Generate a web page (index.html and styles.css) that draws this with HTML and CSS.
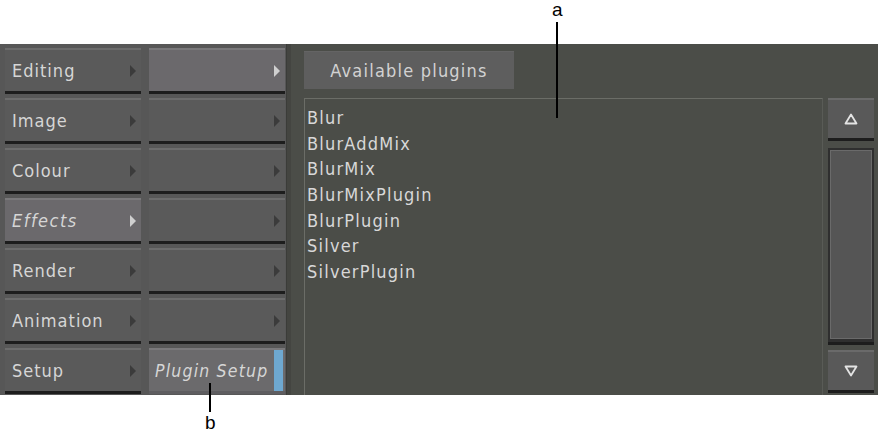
FILE: index.html
```html
<!DOCTYPE html>
<html>
<head>
<meta charset="utf-8">
<link rel="stylesheet" href="styles.css">
</head>
<body>
<div class="page">
  <div class="top-space"></div>
  <div class="panel">
    <div class="menus">
      <div class="btn"><span class="lbl">Editing</span><span class="arr"></span></div>
      <div class="btn hl"><span class="lbl"></span><span class="arr"></span></div>
      <div class="btn"><span class="lbl">Image</span><span class="arr"></span></div>
      <div class="btn"><span class="lbl"></span><span class="arr"></span></div>
      <div class="btn"><span class="lbl">Colour</span><span class="arr"></span></div>
      <div class="btn"><span class="lbl"></span><span class="arr"></span></div>
      <div class="btn hl"><span class="lbl it">Effects</span><span class="arr"></span></div>
      <div class="btn"><span class="lbl"></span><span class="arr"></span></div>
      <div class="btn"><span class="lbl">Render</span><span class="arr"></span></div>
      <div class="btn"><span class="lbl"></span><span class="arr"></span></div>
      <div class="btn"><span class="lbl">Animation</span><span class="arr"></span></div>
      <div class="btn"><span class="lbl"></span><span class="arr"></span></div>
      <div class="btn"><span class="lbl">Setup</span><span class="arr"></span></div>
      <div class="btn hl sel"><span class="lbl it">Plugin Setup</span><span class="bar"></span></div>
    </div>
    <div class="sep"></div>
    <div class="content">
      <div class="header"><div class="title">Available plugins</div></div>
      <div class="listrow">
        <div class="list">
          <div class="item">Blur</div>
          <div class="item">BlurAddMix</div>
          <div class="item">BlurMix</div>
          <div class="item">BlurMixPlugin</div>
          <div class="item">BlurPlugin</div>
          <div class="item">Silver</div>
          <div class="item">SilverPlugin</div>
        </div>
        <div class="scroll">
          <div class="sbtn"><svg width="14" height="12" viewBox="0 0 14 12"><path d="M7 1.5 L12.5 10.5 L1.5 10.5 Z" fill="none" stroke="#e4e4e4" stroke-width="1.8" stroke-linejoin="round"/></svg></div>
          <div class="track"><div class="thumb"></div></div>
          <div class="sbtn"><svg width="14" height="12" viewBox="0 0 14 12"><path d="M7 10.5 L12.5 1.5 L1.5 1.5 Z" fill="none" stroke="#e4e4e4" stroke-width="1.8" stroke-linejoin="round"/></svg></div>
        </div>
      </div>
    </div>
  </div>
  <div class="callout ca"><span class="ltr">a</span><span class="line"></span></div>
  <div class="callout cb"><span class="line"></span><span class="ltr">b</span></div>
</div>
</body>
</html>
```
FILE: styles.css
```css
html, body { margin: 0; padding: 0; background: #ffffff; }
.page { position: relative; width: 878px; height: 438px; overflow: hidden; font-family: "DejaVu Sans Condensed", "DejaVu Sans", sans-serif; }
.top-space { height: 44px; }
.panel { height: 351px; display: flex; background: #4b4d48; }
.menus {
  width: 286px; background: #575757; padding: 4px 0 0 5px; box-sizing: border-box;
  display: grid; grid-template-columns: 136px 136px; column-gap: 8px; row-gap: 4px; grid-auto-rows: 46px; align-content: start;
}
.sep { width: 5px; background: #444541; border-left: 1px solid #3b3c39; box-sizing: border-box; }
.btn {
  background: #5a5a5a; border-top: 2px solid #6c6c6c; border-bottom: 3px solid #1d1d1d;
  height: 41px; display: flex; align-items: center; justify-content: space-between;
  padding: 0 5px 0 7px; position: relative;
}
.btn.hl { background: #6b696c; border-top-color: #7a797b; }
.btn.sel { border-bottom: 3px solid #5e5d60; background: #6b6a6c; padding-right: 2px; padding-left: 6px; }
.lbl { color: #d6d6d6; font-size: 18px; letter-spacing: 1px; }
.lbl.it { font-style: italic; letter-spacing: 1.5px; }
.sel .lbl.it { letter-spacing: 1.2px; font-size: 17.5px; }
.arr { width: 0; height: 0; border-top: 6px solid transparent; border-bottom: 6px solid transparent; border-left: 6px solid #3b3b3b; }
.btn.hl .arr { border-left-color: #cfcfcf; }
.bar { width: 9px; height: 41px; background: #6ea8d0; }
.content { flex: 1; display: flex; flex-direction: column; padding: 6px 4px 0 13px; }
.header { height: 48px; flex-shrink: 0; }
.title {
  width: 210px; height: 38px; margin-top: 1px; background: #5e5e5e; border-top: 1px solid #646464;
  color: #d2d2d2; font-size: 18px; letter-spacing: 1.2px; display: flex; align-items: center; justify-content: center; box-sizing: border-box;
}
.listrow { display: flex; height: 297px; }
.list {
  width: 519px; height: 297px; box-sizing: border-box; border: 1px solid #6b6d67; border-right-color: #595b56; border-bottom: none;
  padding: 6px 0 0 2px;
}
.item { color: #d8d8d8; font-size: 18px; height: 25.7px; line-height: 25.7px; letter-spacing: 1.2px; }
.scroll { margin-left: 5px; width: 46px; display: flex; flex-direction: column; }
.sbtn {
  height: 38px; background: #595959; border-top: 2px solid #6a6a6a; border-bottom: 3px solid #1d1d1d;
  display: flex; align-items: center; justify-content: center; flex-shrink: 0;
}
.track { margin: 7px 0 5px 0; height: 197px; background: #2f2f2f; padding: 2px 2px 3px 2px; box-sizing: border-box; border-bottom: 3px solid #1d1d1d; flex-shrink: 0; }
.thumb { height: 100%; background: #555555; border: 1px solid #6a6a6a; box-sizing: border-box; }
.callout { position: absolute; display: flex; flex-direction: column; align-items: center; font-family: "Liberation Sans", Arial, sans-serif; font-size: 19px; color: #000; }
.callout .line { width: 2px; background: #000; }
.ca { left: 552px; top: 0px; }
.ca .ltr { line-height: 20px; }
.ca .line { height: 96px; margin-top: 2px; }
.cb { left: 205px; top: 383px; }
.cb .line { height: 29px; }
.cb .ltr { line-height: 22px; }
```
